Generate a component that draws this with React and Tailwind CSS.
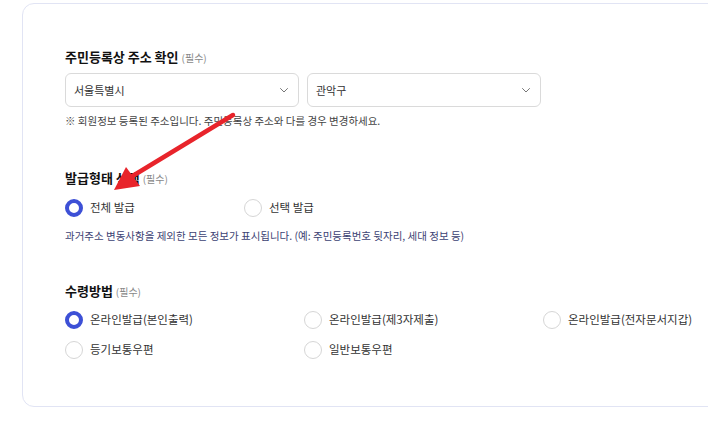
import React, { useState } from 'react';

const font = { fontFamily: '"Noto Sans CJK KR", "Noto Sans", sans-serif' };

const Radio = ({ checked, label, onClick }) => (
  <button type="button" onClick={onClick} className="flex items-center gap-[7px] text-left">
    <span
      className={`w-[18px] h-[18px] rounded-full shrink-0 bg-white ${
        checked ? 'border-[4px] border-[#3d50d6]' : 'border border-[#d6d6d6]'
      }`}
    />
    <span className="text-[11.5px] text-[#333] leading-none">{label}</span>
  </button>
);

const Select = ({ value }) => (
  <div className="flex-1 h-[34px] border border-[#dadada] rounded-[6px] flex items-center justify-between pl-[8px] pr-[10px] bg-white">
    <span className="text-[11px] text-[#333]">{value}</span>
    <svg width="8" height="5" viewBox="0 0 8 5" fill="none">
      <path d="M0.5 0.5l3.5 3.5 3.5-3.5" stroke="#777" strokeWidth="1" strokeLinecap="round" strokeLinejoin="round" />
    </svg>
  </div>
);

const Title = ({ children }) => (
  <h2 className="flex items-baseline gap-[3px] h-[20px] leading-[20px]">
    <span className="text-[13px] font-bold text-[#111]">{children}</span>
    <span className="text-[10px] text-[#888]">(필수)</span>
  </h2>
);

export default function App() {
  const [type, setType] = useState('all');
  const [receive, setReceive] = useState('self');

  const receiveOptions = [
    { id: 'self', label: '온라인발급(본인출력)' },
    { id: 'third', label: '온라인발급(제3자제출)' },
    { id: 'wallet', label: '온라인발급(전자문서지갑)' },
    { id: 'reg', label: '등기보통우편' },
    { id: 'normal', label: '일반보통우편' },
  ];

  return (
    <div className="relative w-[708px] h-[422px] overflow-hidden bg-white" style={font}>
      <div className="ml-[22px] mt-[3px] w-[720px] h-[404px] border border-[#e1e4f4] rounded-[12px] pl-[42px] pt-[43px]">
        {/* 주소 확인 */}
        <Title>주민등록상 주소 확인</Title>
        <div className="flex gap-[8px] w-[476px] mt-[6px]">
          <Select value="서울특별시" />
          <Select value="관악구" />
        </div>
        <p className="mt-[6px] text-[10.5px] text-[#444] leading-[16px]">
          ※ 회원정보 등록된 주소입니다. 주민등록상 주소와 다를 경우 변경하세요.
        </p>

        {/* 발급형태 */}
        <div className="mt-[39px]">
          <Title>발급형태 선택</Title>
          <div className="flex mt-[11px]">
            <div className="w-[179px]">
              <Radio checked={type === 'all'} label="전체 발급" onClick={() => setType('all')} />
            </div>
            <Radio checked={type === 'select'} label="선택 발급" onClick={() => setType('select')} />
          </div>
          <p className="mt-[11px] text-[10.5px] text-[#3c4273] leading-[16px]">
            과거주소 변동사항을 제외한 모든 정보가 표시됩니다. (예: 주민등록번호 뒷자리, 세대 정보 등)
          </p>
        </div>

        {/* 수령방법 */}
        <div className="mt-[37px]">
          <Title>수령방법</Title>
          <div className="grid grid-cols-[239px_239px_200px] gap-y-[12px] mt-[10px]">
            {receiveOptions.map((o) => (
              <Radio key={o.id} checked={receive === o.id} label={o.label} onClick={() => setReceive(o.id)} />
            ))}
          </div>
        </div>
      </div>

      {/* annotation arrow */}
      <svg className="absolute left-0 top-0 pointer-events-none" width="708" height="422">
        <line x1="233" y1="115" x2="126" y2="180" stroke="#e8242b" strokeWidth="4.5" strokeLinecap="round" />
        <polygon points="114,190 126,167 140,186" fill="#e8242b" />
      </svg>
    </div>
  );
}
